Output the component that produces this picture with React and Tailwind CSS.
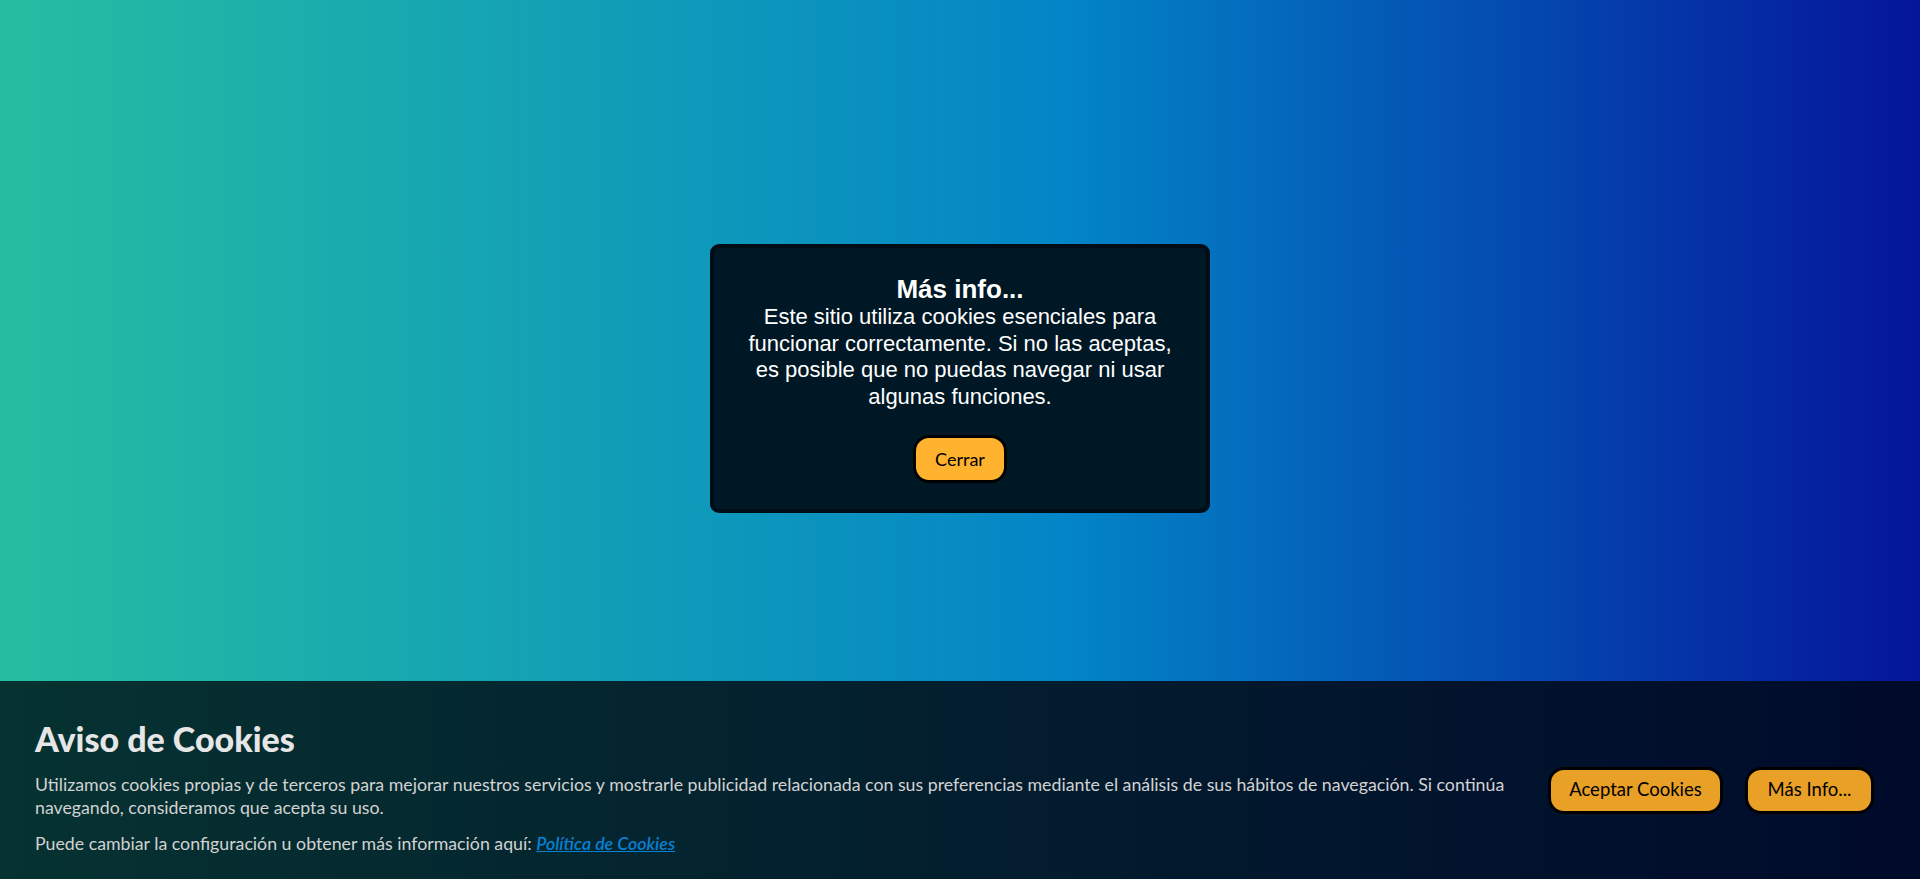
export default function App() {
  return (
    <div className="flex h-[879px] w-full flex-col overflow-hidden bg-[linear-gradient(to_right,#25bea1_0%,#0386c7_55%,#05159b_100%)]">
      <div className="flex flex-1 justify-center pt-[244px]">
        <div className="h-fit w-[500px] rounded-[9px] border-4 border-[#000d16] bg-[#001825] px-6 py-[26px] text-center text-white font-['Liberation_Sans',Arial,sans-serif]">
          <h2 className="text-[26px] font-bold leading-[30px]">Más info...</h2>
          <p className="text-[22px] leading-[26.5px]">
            Este sitio utiliza cookies esenciales para funcionar correctamente. Si no las aceptas, es posible que no puedas navegar ni usar algunas funciones.
          </p>
          <button className="mt-[25px] h-[48px] rounded-[16px] border-[3px] border-black bg-[#ffb22d] px-[19px] text-[18px] text-black font-['Lato',sans-serif]">
            Cerrar
          </button>
        </div>
      </div>

      <div className="flex h-[198px] items-center gap-10 bg-[linear-gradient(to_right,#063231,#000a2b)] pl-[35px] pr-[46px] font-['Lato',sans-serif]">
        <div className="flex-1 pt-[14px]">
          <h3 className="text-[34px] font-black leading-[38px] text-[#e6e6e6]">Aviso de Cookies</h3>
          <p className="mt-[15px] text-[17.75px] leading-[23px] text-[#d2d2d2]">
            Utilizamos cookies propias y de terceros para mejorar nuestros servicios y mostrarle publicidad relacionada con sus preferencias mediante el análisis de sus hábitos de navegación. Si continúa navegando, consideramos que acepta su uso.
          </p>
          <p className="mt-[13px] text-[17.75px] leading-[23px] text-[#d2d2d2]">
            Puede cambiar la configuración u obtener más información aquí:{' '}
            <a href="#" className="font-semibold italic text-[#0a80d2] underline">Política de Cookies</a>
          </p>
        </div>
        <div className="flex gap-[22px] pt-[20px]">
          <button className="h-[47px] w-[175px] rounded-[16px] border-[3px] border-black bg-[#e8a026] text-[18.5px] text-black">
            Aceptar Cookies
          </button>
          <button className="h-[47px] w-[129px] rounded-[16px] border-[3px] border-black bg-[#e8a026] text-[18.5px] text-black">
            Más Info...
          </button>
        </div>
      </div>
    </div>
  );
}
